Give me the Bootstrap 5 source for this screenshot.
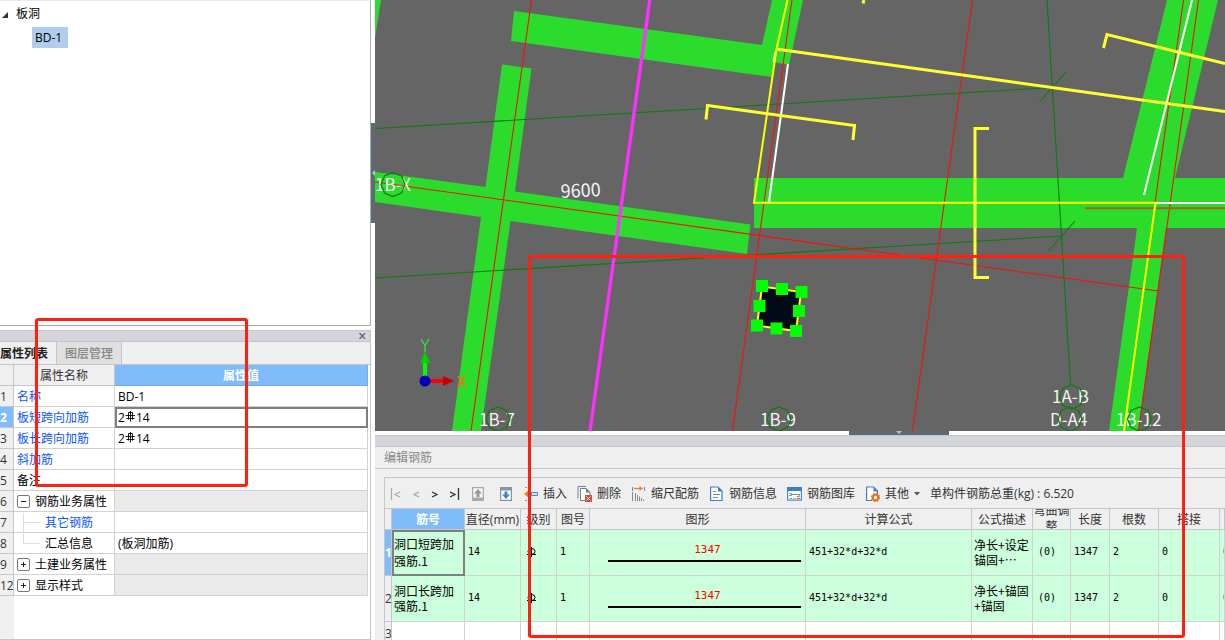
<!DOCTYPE html>
<html lang="zh-CN">
<head>
<meta charset="utf-8">
<meta name="viewport" content="width=device-width, initial-scale=1">
<title>板洞 BD-1</title>
<link href="https://cdn.jsdelivr.net/npm/bootstrap@5.3.0/dist/css/bootstrap.min.css" rel="stylesheet">
<style>
:root{--line:#c5c6ca;--cell:#d2d2d2;--panel:#efefef;--bar:#d4d5da;--sel:#80bbfb;--mark-red:#ff2012}
body{font-family:"Open Sans","Noto Sans CJK SC",sans-serif;font-size:12px;line-height:16px;color:#000;background:#fff}
button{font:inherit;color:inherit;background:none;border:0;padding:0}
.side{width:371px}
.tree-pane{flex:0 0 326px;border:1px solid #acacac;border-top-color:#e9e9e9;border-left:0}
.tree-pane ul{padding:5px 0 0 2px}
.tree-node{padding:3px;background:#b2cced;width:36px;height:21px;white-space:nowrap}
.tree-pane ul ul{padding:5px 0 0 30px}
.dock{border:1px solid var(--line);border-left:0;margin-top:4px}
.dock-bar{height:11px;background:var(--bar);border-bottom:1px solid var(--line)}
.dock-bar button{width:15px;height:10px}
.tab-strip{height:23px;background:var(--panel);border-bottom:1px solid var(--line)}
.tab-strip button{height:22px;padding-top:2px;border-right:1px solid var(--line);width:65px;color:#858585;font-weight:500;background:#e0e0e0}
.tab-strip button.active{width:57px;padding-right:8px;background:var(--panel);color:#222;font-weight:700;white-space:nowrap}
.side-body{background:linear-gradient(90deg,#f0f0f0 14px,#fff 14px)}
table{border-collapse:separate;border-spacing:0;table-layout:fixed}
.props{width:368px}
.props th,.props td{height:21px;padding:1px 3px 0;border-right:1px solid var(--cell);border-bottom:1px solid var(--cell);white-space:nowrap;line-height:19px;background:#fff}
.props thead th{background:var(--panel);border-color:var(--line);font-weight:400;color:#333;text-align:center}
.props tbody th{background:#f0f0f0;border-color:var(--line);font-weight:400;color:#333;padding:1px 0 0;text-align:left;overflow:hidden}
.props thead th.hot{background:var(--sel);color:#fff;font-weight:700;border-color:#6faeee}
.props tbody th.hot{background:var(--sel);color:#fff;font-weight:700}
.props td.focus-cell{outline:2px solid #7f7f7f;outline-offset:-2px}
.props td.group-cell{background:#eaeaea}
.key{color:#0b57ff}
.rebar{width:10px;height:11px;margin:0 1px 4px 0}
.twist{width:13px;height:13px;border:1px solid #777;border-radius:2px;position:relative;margin-right:5px;vertical-align:-1px}
.twist::before,.twist.plus::after{content:"";position:absolute;left:3px;top:5px;width:5px;height:1px;background:#222}
.twist.plus::after{transform:rotate(90deg)}
.branch{width:28px;height:19px;vertical-align:top}
.v-split{width:4px}
.grip{background:#5d6a76}
.v-split .grip{height:100px;margin-top:123px}
.h-split{height:4px}
.h-split .grip{width:100px;margin-left:198px}
.model{min-height:0;background:#656565}
.model text{font-family:"Noto Sans CJK SC",sans-serif;font-size:17px;fill:#f4f4f4}
.edit-dock{height:205px;background:var(--panel);border-top:1px solid var(--line)}
.edit-title{height:22px;padding:3px 9px;color:#888;border-bottom:1px solid var(--line)}
.grid-box{margin:8px 0 0 9px;border-top:1px solid var(--line);border-left:1px solid var(--line)}
.tools{height:31px;padding-top:1px;border-bottom:1px solid var(--line);color:#333;white-space:nowrap;gap:10px}
.tools svg{display:block}
.nav-set{width:128px;padding-left:5px;gap:12px}
.act{display:flex;align-items:center;gap:5px}
.bars{width:100%}
.bars th,.bars td{border-right:1px solid var(--cell);border-bottom:1px solid var(--cell);padding:0 3px;background:#ccffdb;height:46px;vertical-align:middle}
.bars thead th{height:21px;background:var(--panel);border-color:var(--line);font-weight:400;color:#333;text-align:center;padding:2px 0 0;white-space:nowrap}
.bars thead th.hot{background:var(--sel);color:#fff;font-weight:700}
.bars thead th.narrow{padding:0}
.bars thead .fold{height:20px;white-space:normal;overflow:hidden;line-height:16px;display:flex;align-items:center;justify-content:center}
.bars tbody th{background:#f0f0f0;border-color:var(--line);padding:0;font-weight:400;color:#333;overflow:hidden}
.bars tbody th.hot{background:var(--sel);color:#fff;font-weight:700}
.bars td{font-family:"DejaVu Sans Mono","Noto Sans CJK SC",monospace;font-size:10px;padding-bottom:2px}
.bars td.words{font-family:"Noto Sans CJK SC",sans-serif;font-size:12px;line-height:15px;white-space:nowrap;padding:0 2px 2px}
.bars td.focus-cell{outline:2px solid #7f7f7f;outline-offset:-2px;line-height:17px}
.bars td.clip{overflow:hidden}
.bars td.indent{padding-left:5px}
.bars tr.blank td{background:#fff}
.bars td.shape{padding:0 4px 0 18px}
.len{font-family:"DejaVu Sans Mono",monospace;font-size:11px;line-height:14px;color:#f00;text-align:center;border-bottom:2px solid #000;padding:0 0 3px 6px}
.callout{position:absolute;border:3px solid var(--mark-red);border-radius:3px;pointer-events:none}
.callout-props{left:35px;top:318px;width:213px;height:169px}
.callout-edit{left:528px;top:255px;right:40px;bottom:2px}
</style>
<script src="https://cdn.jsdelivr.net/npm/bootstrap@5.3.0/dist/js/bootstrap.bundle.min.js"></script>
</head>
<body>
<svg width="0" height="0" class="position-absolute" aria-hidden="true">
  <symbol id="rebar" viewBox="0 0 10 11"><path d="M5.500 0v10.500M.5 4.500h9.500M1.500 7.500h8M3.500 1.500v7M7.500 1.500v7M3.500 1.500h4" stroke="#000" stroke-width=".9" fill="none"/></symbol>
  <symbol id="rebar-round" viewBox="0 0 10 11"><path d="M5.500 1v10M1 8.500h9" stroke="#000" fill="none"/><ellipse cx="5.500" cy="5.500" rx="3.500" ry="3" fill="none" stroke="#000"/></symbol>
</svg>
<div class="d-flex vh-100 overflow-hidden position-relative">
  <aside class="side d-flex flex-column flex-shrink-0">
    <nav class="tree-pane">
      <ul class="list-unstyled m-0">
        <li><svg width="6" height="6"><path d="M6 0v6H0z" fill="#333"/></svg><span class="ms-1 ps-1">板洞</span>
          <ul class="list-unstyled"><li class="tree-node">BD-1</li></ul>
        </li>
      </ul>
    </nav>
    <section class="dock flex-grow-1 d-flex flex-column">
      <div class="dock-bar d-flex justify-content-end"><button type="button" aria-label="关闭" class="d-flex align-items-center justify-content-center"><svg width="7" height="6"><path d="M.5 0l5.500 6M6 0L.5 6" stroke="#666" stroke-width="1.300"/></svg></button></div>
      <div class="tab-strip d-flex" role="tablist">
        <button type="button" role="tab" class="active" aria-selected="true">属性列表</button>
        <button type="button" role="tab" aria-selected="false">图层管理</button>
      </div>
      <div class="side-body flex-grow-1">
        <table class="props">
          <colgroup><col style="width:14px"><col style="width:101px"><col></colgroup>
          <thead><tr><th></th><th scope="col">属性名称</th><th scope="col" class="hot">属性值</th></tr></thead>
          <tbody>
            <tr><th>1</th><td class="key">名称</td><td>BD-1</td></tr>
            <tr><th class="hot">2</th><td class="key">板短跨向加筋</td><td class="focus-cell">2<svg class="rebar"><use href="#rebar"/></svg>14</td></tr>
            <tr><th>3</th><td class="key">板长跨向加筋</td><td>2<svg class="rebar"><use href="#rebar"/></svg>14</td></tr>
            <tr><th>4</th><td class="key">斜加筋</td><td></td></tr>
            <tr><th>5</th><td>备注</td><td></td></tr>
            <tr><th>6</th><td><button type="button" class="twist" aria-label="收起"></button>钢筋业务属性</td><td class="group-cell"></td></tr>
            <tr><th>7</th><td class="key"><svg class="branch"><path d="M6.500 0v19M6.500 9.500h16" stroke="#ddd" fill="none"/></svg>其它钢筋</td><td></td></tr>
            <tr><th>8</th><td><svg class="branch"><path d="M6.500 0v9.500h16" stroke="#ddd" fill="none"/></svg>汇总信息</td><td>(板洞加筋)</td></tr>
            <tr><th>9</th><td><button type="button" class="twist plus" aria-label="展开"></button>土建业务属性</td><td class="group-cell"></td></tr>
            <tr><th>12</th><td><button type="button" class="twist plus" aria-label="展开"></button>显示样式</td><td class="group-cell"></td></tr>
          </tbody>
        </table>
      </div>
    </section>
  </aside>
  <div class="v-split flex-shrink-0"><div class="grip d-flex align-items-center"><svg width="4" height="6"><path d="M4 0v6L1 3z" fill="#bbc2c8"/></svg></div></div>

  <main class="flex-grow-1 d-flex flex-column" style="min-width:0">
    <svg class="model flex-grow-1 w-100" viewBox="375 0 850 431" preserveAspectRatio="xMinYMin slice" role="img" aria-label="结构平面图">
      <g fill="#2cdc2c">
        <path d="M375 0h6l-6 38z"/>
        <path d="M514 11L762 45 772 0H803L789 65 775 62 772 77 511 41z"/>
        <path d="M502 64.500L531.500 68.500 515 191.500 750.500 224.500 747 254 510.500 221 481 431H452L481 217 375 202V172L485.500 187z"/>
        <path d="M754 178H1123L1167 0H1218L1175 178H1225V228H1166L1138 431H1109L1137 228H754z"/>
      </g>
      <g stroke="#0b7d0b" stroke-width="1.100" fill="none">
        <path d="M375 128.500L1052 87.500M375 278L1062 236M1047 0L1070.500 384M1039.500 102L1066 72M1048.500 251L1075 221"/>
      </g>
      <g stroke="#f5120c" stroke-width="1.100" fill="none">
        <path d="M531.500 0L471 431M792 0L732.500 431M972.500 0L912.500 431M1183.500 0L1155 203M1198.500 0L1138.500 431M375 182L1158 291"/>
        <path d="M1085 208.200H1225" stroke="#a0641a" stroke-width="2"/>
      </g>
      <path d="M649.700 0L590 431" stroke="#ff30ff" stroke-width="3.300"/>
      <path d="M788 64L769 202M775.500 52L773.500 62M1192 0L1144 195M1156 203H1225" stroke="#fff" stroke-width="2" fill="none"/>
      <path d="M787.500 0L776.500 49 754 202.800H1155.500L1124 431" stroke="#ff0" stroke-width="2" fill="none"/>
      <path d="M776 49L1225 111.500M706 119.500L707.500 105.500 854.500 125.500 853 140M989 128.500H975V277.500H989M1103.500 48L1107 34.500 1225 63.500M863 3.500L864 0" stroke="#ffff30" stroke-width="3" fill="none"/>
      <g>
        <text x="375" y="191">1B-X</text>
        <text x="561" y="198" style="font-size:18px" transform="rotate(-3 561 198)">9600</text>
        <text x="479" y="426">1B-7</text>
        <text x="760" y="426">1B-9</text>
        <text x="1052" y="403">1A-B</text>
        <text x="1050" y="426">D-A4</text>
        <text x="1116" y="426">1B-12</text>
      </g>
      <defs><polygon id="bubble" points="0,-12 8.500,-8.500 12,0 8.500,8.500 0,12 -8.500,8.500 -12,0 -8.500,-8.500" fill="none" stroke="#0b7d0b" stroke-width="1.200"/></defs>
      <use href="#bubble" x="393" y="184.500"/><use href="#bubble" x="498" y="419"/><use href="#bubble" x="779" y="419"/>
      <use href="#bubble" x="1071.500" y="397"/><use href="#bubble" x="1070" y="419"/><use href="#bubble" x="1139.500" y="419"/>
      <path d="M762 286.500L801 292 796 331 757 325.500z" fill="#030a18" stroke="#ff0" stroke-width="2"/>
      <path d="M756 280h12v12h-12zM776 283h12v12h-12zM795.500 286h12v12h-12zM753.500 300h12v12h-12zM793 305h12v12h-12zM751 319.500h12v12h-12zM770.500 322.500h12v12h-12zM790 325h12v12h-12z" fill="#0f0"/>
      <path d="M423 378V363h4v15z" fill="#0f0"/><path d="M420 363L425 351.500 430 363z" fill="#00d400"/>
      <path d="M428 379h16v4h-16z" fill="#f00"/><path d="M443 376L454 381 443 386z" fill="#c80000"/>
      <circle cx="425" cy="381" r="5.500" fill="#0000b8"/>
      <path d="M421 339L425 345.500 429 339M425 345.500V352" stroke="#2cf02c" stroke-width="1.200" fill="none"/>
      <path d="M458 376L465 387M465 376L458 387" stroke="#ff6a10" stroke-width="1.500" fill="none"/>
    </svg>
    <div class="h-split d-flex justify-content-center flex-shrink-0"><div class="grip d-flex justify-content-center"><svg width="6" height="4"><path d="M0 0h6L3 3z" fill="#bbc2c8"/></svg></div></div>
    <section class="edit-dock flex-shrink-0 overflow-hidden">
      <div class="dock-bar"></div>
      <div class="edit-title">编辑钢筋</div>
      <div class="grid-box">
        <div class="tools d-flex align-items-center" role="toolbar">
          <div class="nav-set d-flex align-items-center">
            <button type="button" aria-label="首行" disabled><svg width="11" height="14"><path d="M1.500 1v12M10 5L5 7.500l5 2.500" stroke="#aaa" fill="none" stroke-width="1.200"/></svg></button>
            <button type="button" aria-label="上一行" disabled><svg width="6" height="14"><path d="M6 5L1 7.500l5 2.500" stroke="#aaa" fill="none" stroke-width="1.200"/></svg></button>
            <button type="button" aria-label="下一行"><svg width="7" height="14"><path d="M1 5l5 2.500-5 2.500" stroke="#333" fill="none" stroke-width="1.300"/></svg></button>
            <button type="button" aria-label="末行"><svg width="10" height="14"><path d="M0 5l5 2.500-5 2.500M8.500 1v12" stroke="#333" fill="none" stroke-width="1.300"/></svg></button>
            <button type="button" aria-label="上移"><svg width="12" height="14"><path d="M.6.600h10.800v12.800H.6z" fill="#f5f5f5" stroke="#aaa" stroke-width="1.200"/><path d="M0 10.500h12V14H0z" fill="#aaa"/><path d="M6 2l4 4.500H7.500V10h-3V6.500H2z" fill="#999"/></svg></button>
            <button type="button" aria-label="下移" class="ps-1"><svg width="12" height="14"><path d="M.6.600h10.800v12.800H.6z" fill="#fff" stroke="#8495a0" stroke-width="1.200"/><path d="M0 0h12v3.500H0z" fill="#8495a0"/><path d="M6 12L2 7.500h2.500V4.500h3v3H10z" fill="#3a83d8"/></svg></button>
          </div>
          <button type="button" class="act"><svg width="15" height="16"><path d="M1 8l5-4v8z" fill="#f07a28"/><path d="M2 1.500h5M2 14.500h5" stroke="#999" stroke-dasharray="2 1"/><path d="M8.500 6.500h6v3h-6z" fill="#cfe2f8" stroke="#4b8ad6"/></svg>插入</button>
          <button type="button" class="act"><svg width="15" height="16"><path d="M1 12.500V.5h8" fill="none" stroke="#74828c"/><path d="M3.500 14.500v-12h5.500l4 4v8z" fill="#fff" stroke="#74828c"/><path d="M9 2l4.500 4.500H9z" fill="#74828c"/><path d="M8 9h7v7H8z" fill="#d9473f"/><path d="M9.500 10.500l4 4M13.500 10.500l-4 4" stroke="#fff"/></svg>删除</button>
          <button type="button" class="act"><svg width="15" height="16"><path d="M3 2.500h7" stroke="#ef7d25" stroke-width="1.300"/><path d="M8.500 0l3.500 2.500L8.500 5z" fill="#ef7d25"/><path d="M1.500 1v4M13.500 1v4" stroke="#4b8ad6"/><path d="M1.500 6v9" stroke="#7d8b94"/><path d="M4.500 7v8M6.500 9v6M8.500 10.500V15M10.500 12v3M12.500 13.500V15" stroke="#7d8b94"/></svg>缩尺配筋</button>
          <button type="button" class="act"><svg width="15" height="16"><path d="M1.600 1h7.400l4 4v9.500H1.600z" fill="#fff" stroke="#3a7fd0" stroke-width="1.200"/><path d="M9 1v4.500h4.500z" fill="#3a7fd0"/><path d="M4 5.500h3M4 8.500h7M4 11.500h5" stroke="#7d8b94"/></svg>钢筋信息</button>
          <button type="button" class="act"><svg width="15" height="14"><path d="M.6.600h13.800v12.500H.6z" fill="#fff" stroke="#4b8ad6" stroke-width="1.200"/><path d="M0 0h15v4H0z" fill="#3a7fd0"/><path d="M2 8.500h2.500v-2h-2M5 7.500h7.500v2H10" stroke="#7d8b94" fill="none"/><path d="M3 11.500h2" stroke="#36a9ff"/><path d="M6 11.500h3" stroke="#f0b020"/><path d="M10 11.500h3" stroke="#e44"/></svg>钢筋图库</button>
          <button type="button" class="act"><svg width="15" height="16"><path d="M12.500 8V5l-4-4H1.600v13.500H7" fill="#fff" stroke="#3a7fd0" stroke-width="1.200"/><path d="M8.500 1v4.500H13z" fill="#3a7fd0"/><circle cx="10.500" cy="11.500" r="2.800" fill="#fff" stroke="#ef6f1c" stroke-width="2"/><circle cx="10.500" cy="11.500" r="4" fill="none" stroke="#ef6f1c" stroke-width="1.500" stroke-dasharray="1.600 1.540"/></svg>其他<svg width="6" height="4"><path d="M0 0h6L3 3.500z" fill="#555"/></svg></button>
          <span>单构件钢筋总重(kg) : 6.520</span>
        </div>
        <table class="bars">
          <colgroup><col style="width:7px"><col style="width:73px"><col style="width:56px"><col style="width:36px"><col style="width:33px"><col style="width:216px"><col style="width:166px"><col style="width:61px"><col style="width:38px"><col style="width:39px"><col style="width:49px"><col style="width:61px"><col></colgroup>
          <thead><tr><th></th><th class="hot">筋号</th><th>直径(mm)</th><th>级别</th><th>图号</th><th>图形</th><th>计算公式</th><th>公式描述</th><th class="narrow"><div class="fold">弯曲调整</div></th><th>长度</th><th>根数</th><th>搭接</th><th></th></tr></thead>
          <tbody>
            <tr><th class="hot">1</th><td class="words focus-cell">洞口短跨加<br>强筋.1</td><td>14</td><td class="indent"><svg class="rebar m-0"><use href="#rebar-round"/></svg></td><td>1</td><td class="shape"><div class="len">1347</div></td><td>451+32*d+32*d</td><td class="words">净长+设定<br>锚固+⋯</td><td class="indent">(0)</td><td>1347</td><td>2</td><td>0</td><td class="clip">0</td></tr>
            <tr><th>2</th><td class="words">洞口长跨加<br>强筋.1</td><td>14</td><td class="indent"><svg class="rebar m-0"><use href="#rebar-round"/></svg></td><td>1</td><td class="shape"><div class="len">1347</div></td><td>451+32*d+32*d</td><td class="words">净长+锚固<br>+锚固</td><td class="indent">(0)</td><td>1347</td><td>2</td><td>0</td><td class="clip">0</td></tr>
            <tr class="blank"><th class="align-top pt-1">3</th><td></td><td></td><td></td><td></td><td></td><td></td><td></td><td></td><td></td><td></td><td></td><td></td></tr>
          </tbody>
        </table>
      </div>
    </section>
  </main>
  <div class="callout callout-props"></div>
  <div class="callout callout-edit"></div>
</div>
</body>
</html>
